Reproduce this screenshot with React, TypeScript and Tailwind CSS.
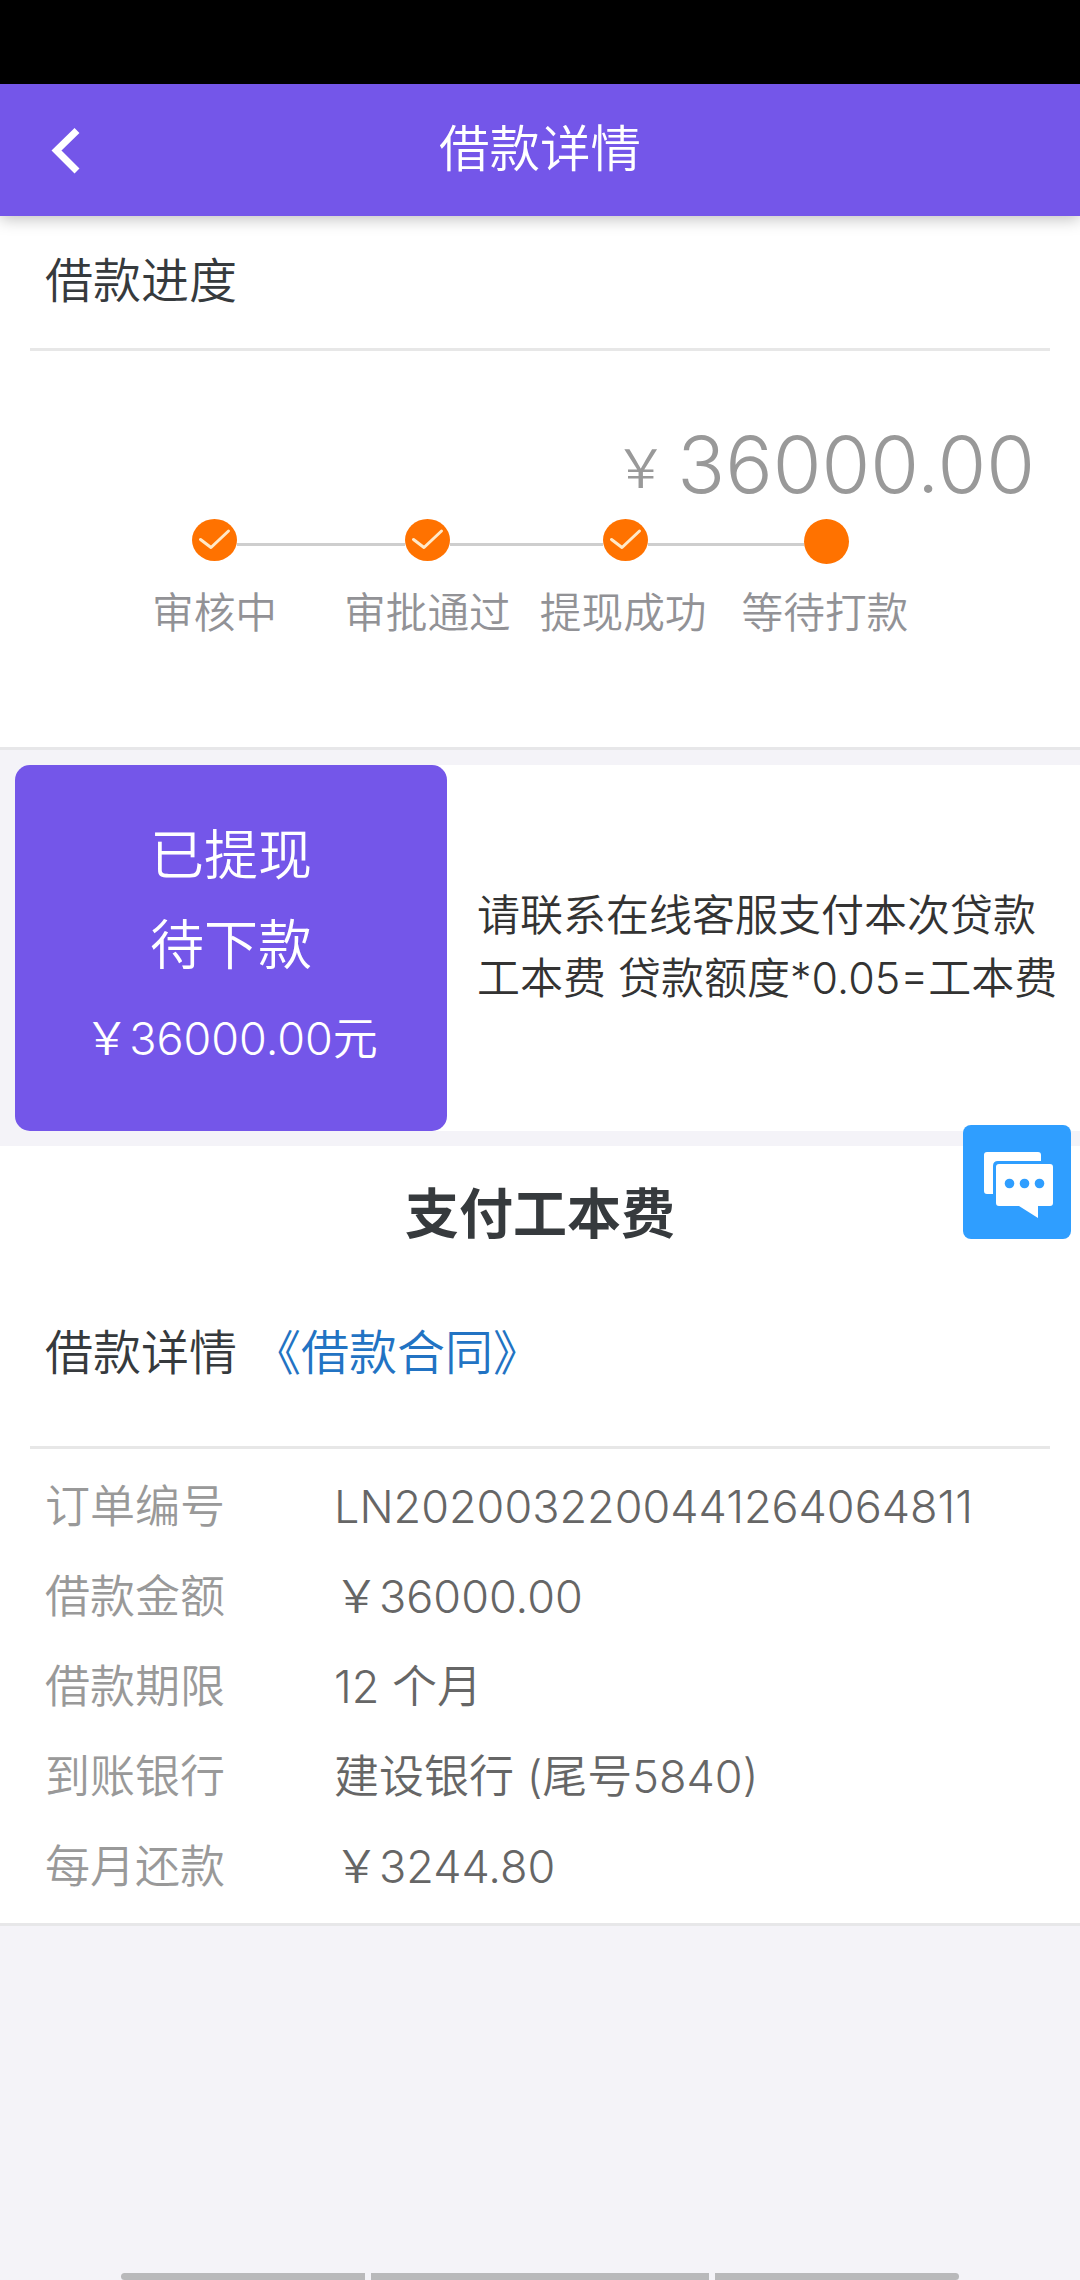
import clsx from 'clsx'

interface Step {
  label: string
  done: boolean
  // length of the connector that leads to this step
  lineClass?: string
  labelClass: string
}

interface DetailRow {
  label: string
  value: string
}

const steps: Step[] = [
  { label: '审核中', done: true, labelClass: 'ml-[152px]' },
  { label: '审批通过', done: true, lineClass: 'w-[168px]', labelClass: 'ml-[67px]' },
  { label: '提现成功', done: true, lineClass: 'w-[153px]', labelClass: 'ml-[29px]' },
  { label: '等待打款', done: false, lineClass: 'w-[156px]', labelClass: 'ml-[35px]' },
]

const details: DetailRow[] = [
  { label: '订单编号', value: 'LN2020032200441264064811' },
  { label: '借款金额', value: '￥36000.00' },
  { label: '借款期限', value: '12 个月' },
  { label: '到账银行', value: '建设银行 (尾号5840)' },
  { label: '每月还款', value: '￥3244.80' },
]

function Header() {
  return (
    <header className="relative z-10 flex h-[132px] items-center justify-center bg-[#7456e9] shadow-[0_3px_15px_rgba(0,0,0,0.25)]">
      <button className="absolute left-[48px] top-[38px]" aria-label="返回">
        <svg width="36" height="56" viewBox="0 0 36 56" fill="none">
          <path d="M29 8.5L8.5 28.5L29 49" stroke="#fff" strokeWidth="7" />
        </svg>
      </button>
      <h1 className="pb-[3px] text-[50.5px] leading-[60px] text-white">借款详情</h1>
    </header>
  )
}

function StepDot({ done }: { done: boolean }) {
  if (!done) {
    return <div className="size-[45px] shrink-0 rounded-full bg-[#ff7200]" />
  }
  return (
    <svg className="h-[42px] w-[45px] shrink-0" viewBox="0 0 45 42" fill="none">
      <ellipse cx="22.5" cy="21" rx="22.5" ry="21" fill="#ff7200" />
      <path d="M8.5 20.5L19 28.5L36.5 12" stroke="#ffe9c8" strokeWidth="3" strokeLinecap="round" strokeLinejoin="round" />
    </svg>
  )
}

function Progress() {
  return (
    <section className="h-[534px] border-b-[3px] border-[#e7e7e9] bg-white">
      <div className="mx-[30px] h-[135px] border-b-[3px] border-[#e7e7e7] px-[15px] pt-[35px]">
        <h2 className="text-[48px] leading-[60px] text-[#363a3d]">借款进度</h2>
      </div>
      <div className="flex h-[168px] items-start justify-end pr-[45px] pt-[68px] text-[#999]">
        <span className="mr-[10px] pt-[5px] text-[53px] leading-[90px]">￥</span>
        <span className="text-[79px] font-light leading-[90px]">36000.00</span>
      </div>
      <div className="flex items-start pl-[192px]">
        {steps.map((step) => (
          <div key={step.label} className="flex items-start">
            {step.lineClass && <div className={clsx('mt-[24px] h-[3px] bg-[#cecece]', step.lineClass)} />}
            <StepDot done={step.done} />
          </div>
        ))}
      </div>
      <div className="mt-[21px] flex text-[41.7px] leading-[56px] text-[#929296]">
        {steps.map((step) => (
          <span key={step.label} className={step.labelClass}>{step.label}</span>
        ))}
      </div>
    </section>
  )
}

function StatusPanel() {
  return (
    <section className="mt-[15px] flex h-[366px] bg-white">
      <div className="w-[15px] bg-[#f4f3f8]" />
      <div className="flex w-[432px] flex-col items-center rounded-[15px] bg-[#7456e9] pt-[46px] text-white shadow-[-15px_0_0_#f4f3f8]">
        <p className="text-[54px] leading-[90px]">已提现</p>
        <p className="text-[54px] leading-[90px]">待下款</p>
        <p className="text-[45px] leading-[96px]">￥36000.00元</p>
      </div>
      <p className="whitespace-nowrap pl-[30px] pt-[119px] text-[43px] leading-[63px] text-[#333]">
        请联系在线客服支付本次贷款
        <br />
        工本费 贷款额度*0.05=工本费
      </p>
    </section>
  )
}

function LoanDetail() {
  return (
    <section className="mt-[15px] h-[780px] border-b-[3px] border-[#e7e7e9] bg-white">
      <h2 className="pt-[36px] text-center text-[54px] font-bold leading-[66px] text-[#363a3d]">支付工本费</h2>
      <div className="mx-[30px] flex h-[201px] items-start border-b-[3px] border-[#e7e7e7] px-[15px] pt-[73px] text-[48px] leading-[64px] text-[#363a3d]">
        <span>借款详情</span>
        <a className="ml-[16px] text-[#2273c3]">《借款合同》</a>
      </div>
      <dl className="pt-[13px]">
        {details.map((row) => (
          <div key={row.label} className="flex h-[90px] items-center pl-[45px] text-[45px] leading-[60px]">
            <dt className="w-[289px] text-[#999]">{row.label}</dt>
            <dd className="whitespace-nowrap text-[#666]">{row.value}</dd>
          </div>
        ))}
      </dl>
    </section>
  )
}

function ChatButton() {
  return (
    <button className="absolute left-[963px] top-[1125px] z-20 h-[114px] w-[108px] rounded-[8px] bg-[#2f9eff]" aria-label="在线客服">
      <svg width="108" height="114" viewBox="0 0 108 114" fill="none">
        <path d="M24 27H75Q78 27 78 30V36H35Q30 36 30 41V69H24Q21 69 21 66V30Q21 27 24 27Z" fill="#fff" />
        <path d="M36 39H87Q90 39 90 42V78Q90 81 87 81H75V93L56 81H36Q33 81 33 78V42Q33 39 36 39Z" fill="#fff" />
        <circle cx="46.5" cy="58.5" r="4.8" fill="#2f9eff" />
        <circle cx="61.5" cy="58.5" r="4.8" fill="#2f9eff" />
        <circle cx="76.5" cy="58.5" r="4.8" fill="#2f9eff" />
      </svg>
    </button>
  )
}

export default function App() {
  return (
    <div className="relative flex h-[2280px] w-[1080px] flex-col overflow-hidden bg-[#f4f3f8] font-['Inter','Noto_Sans_CJK_SC',sans-serif] font-[350]">
      <div className="h-[84px] shrink-0 bg-black" />
      <Header />
      <Progress />
      <StatusPanel />
      <LoanDetail />
      <ChatButton />
      {/* system navigation hints */}
      <div className="mt-auto flex h-[7px] justify-center gap-[6px]">
        <div className="w-[244px] rounded-l-[4px] bg-[#b9b9bb]" />
        <div className="w-[338px] bg-[#b9b9bb]" />
        <div className="w-[244px] rounded-r-[4px] bg-[#b9b9bb]" />
      </div>
    </div>
  )
}
